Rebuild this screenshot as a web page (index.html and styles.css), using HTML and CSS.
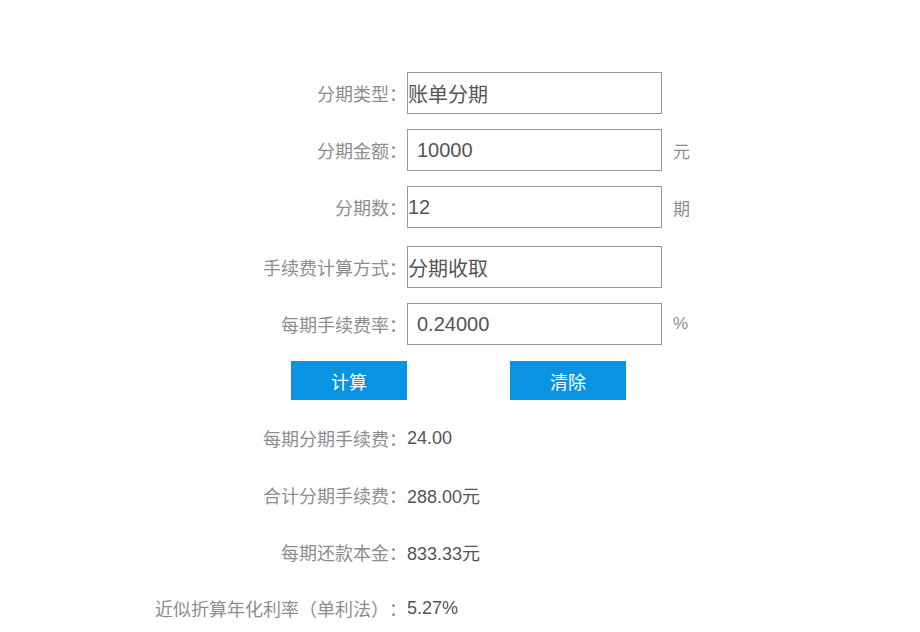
FILE: index.html
```html
<!DOCTYPE html>
<html lang="zh-CN">
<head>
<meta charset="utf-8">
<title>分期计算器</title>
<link rel="stylesheet" href="styles.css">
</head>
<body>
<div class="calc">
  <form class="form">
    <div class="row">
      <label class="label">分期类型：</label>
      <input class="field field-plain" type="text" value="账单分期" readonly>
    </div>
    <div class="row">
      <label class="label">分期金额：</label>
      <input class="field" type="text" value="10000">
      <span class="unit">元</span>
    </div>
    <div class="row row-wide">
      <label class="label">分期数：</label>
      <input class="field field-plain" type="text" value="12" readonly>
      <span class="unit">期</span>
    </div>
    <div class="row">
      <label class="label">手续费计算方式：</label>
      <input class="field field-plain" type="text" value="分期收取" readonly>
    </div>
    <div class="row">
      <label class="label">每期手续费率：</label>
      <input class="field" type="text" value="0.24000">
      <span class="unit">%</span>
    </div>
    <div class="buttons">
      <button type="button" class="btn">计算</button>
      <button type="button" class="btn">清除</button>
    </div>
  </form>
  <div class="results">
    <div class="result"><span class="label">每期分期手续费：</span><span class="value">24.00</span></div>
    <div class="result"><span class="label">合计分期手续费：</span><span class="value">288.00元</span></div>
    <div class="result"><span class="label">每期还款本金：</span><span class="value">833.33元</span></div>
    <div class="result"><span class="label">近似折算年化利率（单利法）：</span><span class="value">5.27%</span></div>
  </div>
</div>
</body>
</html>
```

FILE: styles.css
```css
html, body {
  margin: 0;
  padding: 0;
  background: #ffffff;
}

body {
  font-family: "Liberation Sans", "Noto Sans CJK SC", sans-serif;
  color: #555555;
  text-spacing-trim: space-all;
}

.calc {
  padding-top: 72px;
  width: 920px;
}

.form {
  margin: 0;
}

.row {
  display: flex;
  align-items: center;
  height: 42px;
  margin-bottom: 15px;
}

.row-wide {
  margin-bottom: 18px;
}

.label {
  width: 407px;
  flex: none;
  text-align: right;
  font-size: 18px;
  color: #8e8e8e;
  white-space: nowrap;
}

.field {
  box-sizing: border-box;
  width: 255px;
  height: 42px;
  margin: 0;
  border: 1px solid #999999;
  border-radius: 0;
  padding: 0 0 0 9px;
  font-family: "Liberation Sans", "Noto Sans CJK SC", sans-serif;
  font-size: 20px;
  color: #555555;
  background: #ffffff;
  outline: none;
}

.field-plain {
  padding-left: 0;
}

.unit {
  margin-left: 11px;
  font-size: 17px;
  color: #8e8e8e;
}

.buttons {
  display: flex;
  gap: 103px;
  padding-left: 291px;
  margin-top: 16px;
}

.btn {
  width: 116px;
  height: 39px;
  margin: 0;
  border: none;
  border-radius: 0;
  padding: 0;
  background: #0894e2;
  color: #ffffff;
  font-family: "Liberation Sans", "Noto Sans CJK SC", sans-serif;
  font-size: 18px;
  cursor: pointer;
}

.results {
  margin-top: 10px;
}

.result {
  display: flex;
  align-items: center;
  height: 56.7px;
}

.value {
  font-size: 18px;
  color: #555555;
  white-space: nowrap;
}
```
